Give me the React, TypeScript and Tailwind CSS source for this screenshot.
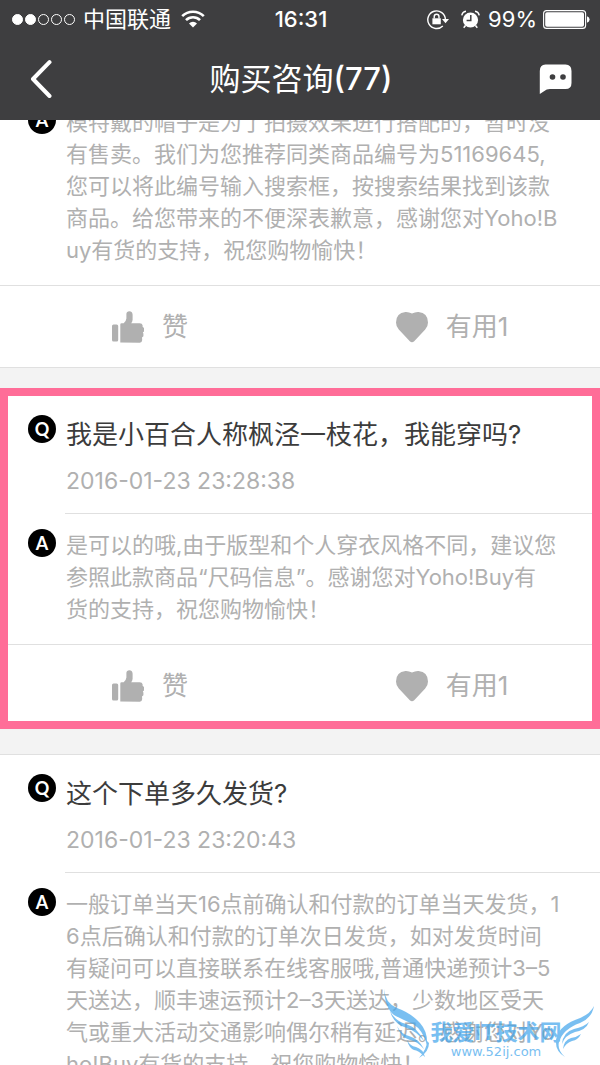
import clsx from 'clsx'

const consults = [
  {
    id: 1,
    answer:
      '模特戴的帽子是为了拍摄效果进行搭配的，暂时没\n有售卖。我们为您推荐同类商品编号为51169645,\n您可以将此编号输入搜索框，按搜索结果找到该款\n商品。给您带来的不便深表歉意，感谢您对Yoho!B\nuy有货的支持，祝您购物愉快！',
    useful: 1,
  },
  {
    id: 2,
    question: '我是小百合人称枫泾一枝花，我能穿吗?',
    time: '2016-01-23 23:28:38',
    answer:
      '是可以的哦,由于版型和个人穿衣风格不同，建议您\n参照此款商品“尺码信息”。感谢您对Yoho!Buy有\n货的支持，祝您购物愉快！',
    useful: 1,
    highlight: true,
  },
  {
    id: 3,
    question: '这个下单多久发货?',
    time: '2016-01-23 23:20:43',
    answer:
      '一般订单当天16点前确认和付款的订单当天发货，1\n6点后确认和付款的订单次日发货，如对发货时间\n有疑问可以直接联系在线客服哦,普通快递预计3–5\n天送达，顺丰速运预计2–3天送达，少数地区受天\n气或重大活动交通影响偶尔稍有延迟。感谢您对Yo\nho!Buy有货的支持，祝您购物愉快！',
    useful: 1,
  },
]

function StatusBar() {
  return (
    <div className="grid h-[38px] grid-cols-[1fr_auto_1fr] items-center pr-2.5 pl-3 text-[22px] leading-none">
      <div className="flex items-center">
        <div className="mr-2 flex gap-0.5">
          {[1, 2, 3, 4, 5].map((n) => (
            <span key={n} className={clsx('h-[11px] w-[11px] rounded-full border border-white', n < 3 && 'bg-white')} />
          ))}
        </div>
        <span>中国联通</span>
        <svg className="ml-2.5 h-[18px] w-6" viewBox="0 0 24 18" fill="none" stroke="currentColor" strokeWidth="2.6">
          <path d="M1.2 6.2a15.3 15.3 0 0 1 21.6 0" />
          <path d="M5 10.2a9.9 9.9 0 0 1 14 0" />
          <path d="M12 17.5 8 13.4a5.7 5.7 0 0 1 8 0Z" fill="currentColor" stroke="none" />
        </svg>
      </div>
      <span className="font-medium">16:31</span>
      <div className="flex items-center justify-end">
        <svg className="mr-3 h-[21px] w-[22px]" viewBox="0 0 22 21" fill="none" stroke="currentColor" strokeWidth="1.4">
          <path d="M15.8 17a8.8 8.8 0 1 1 2.6-6.5" />
          <path d="M15 10h7l-3.5 4.2Z" fill="currentColor" stroke="none" />
          <path d="M5.4 9.3h8.4v6H5.4Z" fill="currentColor" stroke="none" />
          <path d="M7.2 9.5V7.7a2.4 2.4 0 0 1 4.8 0v1.8" />
        </svg>
        <svg className="mr-2 h-[19px] w-[19px]" viewBox="0 0 19 19" fill="none" stroke="currentColor" strokeWidth="1.5">
          <circle cx="9.5" cy="10" r="7.6" fill="currentColor" stroke="none" />
          <path d="M.8 5.3A5 5 0 0 1 5 1.2M18.2 5.3A5 5 0 0 0 14 1.2M4.5 15.5l-1.8 2.3M14.5 15.5l1.8 2.3" />
          <path d="M9.8 5v5.6H5.6" stroke="#3e3e40" />
        </svg>
        <span>99%</span>
        <svg className="ml-1.5 h-[19px] w-[47px]" viewBox="0 0 47 19">
          <rect x=".6" y=".6" width="42" height="17.8" rx="3" fill="none" stroke="#fff" strokeWidth="1.1" />
          <rect x="2.2" y="2.2" width="38.8" height="14.6" rx="1.8" fill="#fff" />
          <path d="M44 6.2q2.6 1 2.6 3.3T44 12.8Z" fill="#fff" />
        </svg>
      </div>
    </div>
  )
}

function Header() {
  return (
    <header className="relative z-10 shrink-0 bg-[#3e3e40] text-white">
      <StatusBar />
      <div className="grid h-[82px] grid-cols-[1fr_auto_1fr] items-center pr-7 pl-[30px]">
        <button type="button" aria-label="返回" className="w-[22px]">
          <svg className="h-[38px] w-[22px]" viewBox="0 0 22 38" fill="none" stroke="currentColor" strokeWidth="4" strokeLinecap="round" strokeLinejoin="round">
            <path d="M19.5 2.2 3 19l16.5 17" />
          </svg>
        </button>
        <h1 className="text-[31px] leading-10">
          购买咨询<span className="font-medium">(77)</span>
        </h1>
        <button type="button" aria-label="消息" className="justify-self-end">
          <svg className="h-[30px] w-[33px]" viewBox="0 0 33 30">
            <path d="M6.5.5h20Q32.5.5 32.5 7v12q0 6-6 6H11q-3.5 0-6 2.2L.8 30V7Q.8.5 6.5.5Z" fill="#fff" />
            <circle cx="13.5" cy="13" r="2.8" fill="#3e3e40" />
            <circle cx="24" cy="13" r="2.8" fill="#3e3e40" />
          </svg>
        </button>
      </div>
    </header>
  )
}

function Badge({ children }: { children: string }) {
  return (
    <span className="flex h-7 w-7 shrink-0 items-center justify-center rounded-full bg-black font-['Lato',sans-serif] text-lg leading-none font-bold text-white">
      {children}
    </span>
  )
}

function ThumbIcon() {
  return (
    <svg className="h-8 w-8" viewBox="0 0 32 32" fill="currentColor">
      <rect x="0" y="13.5" width="6.2" height="17" rx="1.5" />
      <path d="M8.3 31.5V13.5q0-1.2 1.2-1.2h2.2Q14 10.500 14.400 7.500V2.800Q14.600.3 17.400.3t3.200 3.200v5.200q-.2 2-1.400 3.600h8.600q2.400 0 2.800 2v1.500l1.400 1.200v3.400l-1.200 1 .6 1.200v2.600l-1.400 1.200.2 2.600q-.2 2.700-2.400 2.700Z" />
    </svg>
  )
}

function HeartIcon() {
  return (
    <svg className="h-8 w-8" viewBox="0 0 32 32" fill="currentColor">
      <path d="M13.8 30.2 2.8 18.500Q0 15.500 0 11.500 0 2 9.500 1q3.200-.2 6.500 1.500Q19.300.8 22.500 1 32 2 32 11.500q0 4-2.800 7L18.200 30.200q-2.200 2-4.400 0Z" />
    </svg>
  )
}

function ConsultCard({ item }: { item: (typeof consults)[number] }) {
  return (
    <section className={clsx('relative border-b border-[#e0e0e0] bg-white', item.question && 'border-t')}>
      {item.question && (
        <>
          <div className="flex gap-2.5 pt-[19px] pl-7">
            <Badge>Q</Badge>
            <div className="pt-1">
              <h2 className="text-[26px] leading-8 text-[#3c3c3c]">{item.question}</h2>
              <p className="mt-4 text-[23px] leading-7 text-[#b0b0b0]">{item.time}</p>
            </div>
          </div>
          <div className="mt-[18px] mb-[15px] ml-[65px] border-t border-[#e0e0e0]" />
        </>
      )}
      <div className="flex gap-2.5 pb-[19px] pl-7">
        <Badge>A</Badge>
        <p className="text-[22px] leading-8 whitespace-pre text-[#b0b0b0]">{item.answer}</p>
      </div>
      <div className="grid h-[82px] grid-cols-2 border-t border-[#e0e0e0] text-[26px] leading-8 text-[#b0b0b0]">
        <button type="button" className="flex items-center justify-center gap-[18px]">
          <ThumbIcon />
          赞
        </button>
        <button type="button" className="flex items-center justify-center gap-[18px] pl-1">
          <HeartIcon />
          有用{item.useful}
        </button>
      </div>
      {item.highlight && (
        <div className="pointer-events-none absolute inset-x-0 -top-2 -bottom-[3px] border-8 border-[#ff6d98]" />
      )}
    </section>
  )
}

function Watermark() {
  return (
    <div className="pointer-events-none absolute right-0 bottom-0 h-[76px] w-[220px] text-[#41a5ec] opacity-70">
      <svg className="absolute inset-0 h-full w-full" viewBox="0 0 220 76" fill="currentColor">
        <path d="M4 0Q5 14 17 19q14 5 23 15 8 9 7 22-4-15-14-21Q21 30 14 26 5 19 4 0Z" />
        <path d="M10 22q5 10 16 13 12 4 18 17Q36 42 27 39 14 36 10 22Z" />
        <path d="M17 37q4 8 12 10 10 3 15 13-7-8-14-9-9-2-13-14Z" />
        <path d="M27 51q3 6 9 7 7 2 9 10-7-7-11-7-5-2-7-10Z" />
        <path d="M47 52q0 8-8 17 10-6 10-15Z" />
        <path d="M214 17q-2 12-14 17-17 6-21 19-2 8 6 15-10-6-9-17 2-13 19-20 15-5 19-14Z" />
        <path d="M209 33q-3 8-14 10-10 3-13 12 1-12 12-15 10-2 15-7Z" />
        <path d="M201 45q-3 6-9 7-6 2-9 8 1-9 8-11 6-1 10-4Z" />
      </svg>
      <div className="relative flex flex-col items-center pt-[31px] pl-3">
        <span className="text-[22px] leading-6 font-bold">我爱IT技术网</span>
        <span className="font-['DejaVu_Sans',sans-serif] text-[13px] leading-4">www.52ij.com</span>
      </div>
    </div>
  )
}

function App() {
  return (
    <div className="relative flex h-screen flex-col overflow-hidden bg-[#f3f3f3] font-['Inter','Noto_Sans_CJK_SC',sans-serif]">
      <Header />
      <main className="min-h-0 flex-1 overflow-hidden">
        {/* list is scrolled slightly under the header */}
        <div className="-mt-3.5 flex flex-col gap-[27px]">
          {consults.map((item) => (
            <ConsultCard key={item.id} item={item} />
          ))}
        </div>
      </main>
      <Watermark />
    </div>
  )
}

export default App
